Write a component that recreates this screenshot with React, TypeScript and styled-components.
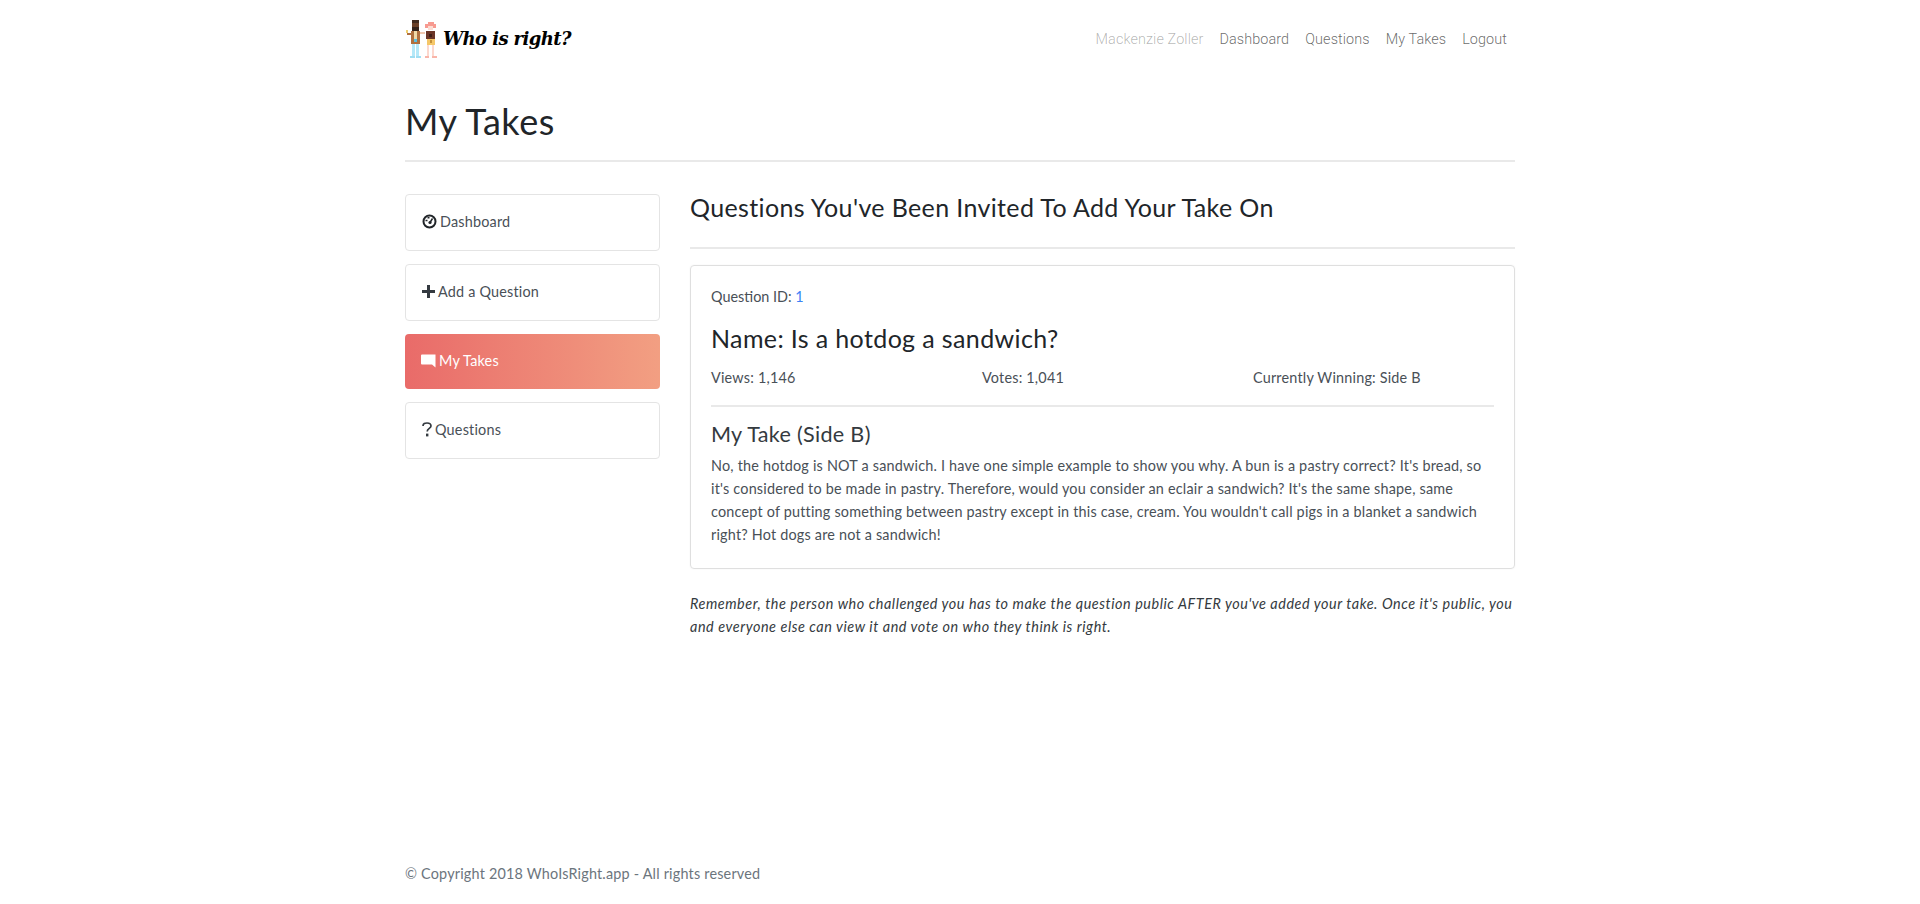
import { ReactNode } from 'react';
import styled, { createGlobalStyle } from 'styled-components';

const GlobalStyle = createGlobalStyle`
  html, body {
    margin: 0;
    padding: 0;
    background: #fff;
  }
  body {
    font-family: Lato, "Open Sans", "Liberation Sans", sans-serif;
    font-size: 14.4px;
    letter-spacing: 0.2px;
    line-height: 23.04px;
    color: #212529;
  }
  * {
    box-sizing: border-box;
  }
`;

const Page = styled.div`
  position: relative;
  width: 1110px;
  min-height: 904px;
  margin: 0 auto;
  display: flex;
  flex-direction: column;
`;

const Header = styled.header`
  display: flex;
  align-items: center;
  justify-content: space-between;
  height: 78px;
`;

const Logo = styled.a`
  display: flex;
  align-items: center;
  gap: 6px;
`;

const LogoText = styled.span`
  font-family: "DejaVu Serif", serif;
  font-style: italic;
  font-weight: 700;
  font-size: 18px;
  letter-spacing: -0.6px;
  color: #000;
  white-space: nowrap;
`;

const Nav = styled.nav`
  display: flex;
  gap: 16px;
  padding: 1px 8px 0 0;
  font-family: Roboto, sans-serif;
  font-weight: 300;
  font-size: 14.4px;
  letter-spacing: 0.1px;
`;

const NavItem = styled.a<{ $muted?: boolean }>`
  color: ${(props) => (props.$muted ? 'rgba(0, 0, 0, 0.3)' : 'rgba(0, 0, 0, 0.6)')};
`;

const PageTitle = styled.h1`
  margin: 0;
  padding: 22px 0 0;
  height: 84px;
  font-size: 36px;
  font-weight: 400;
  line-height: 1.2;
  letter-spacing: 0.5px;
  border-bottom: 2px solid #e9e9e9;
`;

const Columns = styled.div`
  display: grid;
  grid-template-columns: 255px 825px;
  column-gap: 30px;
  margin-top: 32px;
`;

const Sidebar = styled.aside`
  display: flex;
  flex-direction: column;
  gap: 13px;
`;

const SideLink = styled.a<{ $active?: boolean }>`
  display: flex;
  align-items: center;
  gap: 3px;
  height: ${(props) => (props.$active ? '55px' : '57px')};
  padding: 0 16px 2px;
  border-radius: 4px;
  border: ${(props) => (props.$active ? 'none' : '1px solid #e4e4e4')};
  background: ${(props) =>
    props.$active ? 'linear-gradient(90deg, #e96b69 0%, #f29f82 100%)' : '#fff'};
  color: ${(props) => (props.$active ? '#fff' : '#495057')};
`;

const Main = styled.main`
  min-width: 0;
`;

const SectionTitle = styled.h2`
  margin: 0;
  height: 55px;
  font-size: 25px;
  font-weight: 400;
  line-height: 27px;
  letter-spacing: 0.37px;
  border-bottom: 2px solid #e9e9e9;
`;

const Card = styled.section`
  margin-top: 16px;
  height: 304px;
  padding: 20px;
  border: 1px solid #dfdfdf;
  border-radius: 4px;
  box-shadow: 0 0 2px rgba(0, 0, 0, 0.05);
`;

const QuestionId = styled.div`
  color: #495057;
  line-height: 22px;
  letter-spacing: 0;
`;

const IdLink = styled.a`
  color: #3b82f6;
`;

const QuestionName = styled.h3`
  margin: 15px 0 0;
  font-size: 25px;
  font-weight: 400;
  line-height: 30px;
  letter-spacing: 0.37px;
`;

const Stats = styled.div`
  display: grid;
  grid-template-columns: 271px 271px 1fr;
  margin-top: 14px;
  padding-bottom: 16px;
  border-bottom: 2px solid #e9e9e9;
  color: #495057;
  line-height: 22px;
`;

const TakeTitle = styled.h4`
  margin: 13px 0 0;
  font-size: 21.6px;
  font-weight: 400;
  line-height: 28px;
  letter-spacing: 0.3px;
  color: #343a40;
`;

const TakeBody = styled.p`
  margin: 6px 0 0;
  color: #495057;
`;

const Reminder = styled.p`
  margin: 23px 0 0;
  font-style: italic;
  letter-spacing: 0.55px;
  color: #343a40;
`;

const Footer = styled.footer`
  position: absolute;
  left: 0;
  top: 863px;
  color: #6c757d;
  line-height: 22px;
`;

const Px = ({ x, y, w, h, c }: { x: number; y: number; w: number; h: number; c: string }) => (
  <rect x={x} y={y} width={w} height={h} fill={c} />
);

const LogoPeople = () => (
  <svg width="32" height="38" viewBox="0 0 32 38">
    {/* man */}
    <Px x={7} y={0} w={7} h={3} c="#3f2a1e" />
    <Px x={7} y={3} w={7} h={5} c="#6a4028" />
    <Px x={7} y={7} w={7} h={4} c="#33221a" />
    <Px x={6} y={11} w={9} h={13} c="#b0703f" />
    <Px x={9} y={11} w={3} h={8} c="#f0d9a8" />
    <Px x={9} y={19} w={3} h={3} c="#5bbfe0" />
    <Px x={2} y={13} w={4} h={2} c="#b0703f" />
    <Px x={1} y={10} w={2} h={3} c="#f0d070" />
    <Px x={15} y={12} w={5} h={2} c="#f0c8b0" />
    <Px x={7} y={24} w={3} h={12} c="#b5e8f8" />
    <Px x={11} y={24} w={3} h={12} c="#b5e8f8" />
    <Px x={5} y={36} w={5} h={2} c="#a0def2" />
    <Px x={11} y={36} w={5} h={2} c="#a0def2" />
    {/* woman */}
    <Px x={23} y={2} w={6} h={2} c="#f79a90" />
    <Px x={20} y={4} w={11} h={4} c="#f79a90" />
    <Px x={23} y={6} w={5} h={4} c="#fcdcd2" />
    <Px x={21} y={11} w={9} h={8} c="#6b3527" />
    <Px x={24} y={14} w={3} h={3} c="#3f2018" />
    <Px x={22} y={19} w={8} h={6} c="#f5c768" />
    <Px x={25} y={20} w={2} h={3} c="#c4913a" />
    <Px x={22} y={25} w={2} h={11} c="#fcd8ce" />
    <Px x={27} y={25} w={2} h={11} c="#fcd8ce" />
    <Px x={20} y={36} w={4} h={2} c="#f9b5a9" />
    <Px x={27} y={36} w={5} h={2} c="#f9b5a9" />
  </svg>
);

const DashboardIcon = () => (
  <svg width="15" height="15" viewBox="0 0 15 15">
    <circle cx="7.5" cy="7.5" r="6" fill="none" stroke="#212529" strokeWidth="2" />
    <circle cx="8" cy="8.5" r="1.6" fill="#212529" />
    <path d="M8 8.5 L10.5 4.5" stroke="#212529" strokeWidth="1.5" />
    <path d="M3.5 6.5 h2 M5.5 3.8 h2" stroke="#212529" strokeWidth="1.4" />
  </svg>
);

const PlusIcon = () => (
  <svg width="13" height="13" viewBox="0 0 13 13">
    <path d="M5 0h3v5h5v3H8v5H5V8H0V5h5z" fill="#343a40" />
  </svg>
);

const CommentIcon = () => (
  <svg width="15" height="14" viewBox="0 0 15 14">
    <path d="M1 0.5h13.5v13l-3.5-3H1a1 1 0 0 1-1-1v-8a1 1 0 0 1 1-1z" fill="#fff" />
  </svg>
);

const QuestionIcon = () => (
  <svg width="10" height="15" viewBox="0 0 10 15">
    <path
      d="M1 4 C1 1.5 3 1 5 1 C7.4 1 9 2.2 9 4 C9 6.5 5.2 6.3 5.2 9.5"
      fill="none"
      stroke="#343a40"
      strokeWidth="1.7"
    />
    <rect x="4" y="11.6" width="2.4" height="2.8" fill="#343a40" />
  </svg>
);

const sideLinks: { label: string; icon: ReactNode; active?: boolean }[] = [
  { label: 'Dashboard', icon: <DashboardIcon /> },
  { label: 'Add a Question', icon: <PlusIcon /> },
  { label: 'My Takes', icon: <CommentIcon />, active: true },
  { label: 'Questions', icon: <QuestionIcon /> },
];

const App = () => {
  return (
    <>
      <GlobalStyle />
      <Page>
        <Header>
          <Logo>
            <LogoPeople />
            <LogoText>Who is right?</LogoText>
          </Logo>
          <Nav>
            <NavItem $muted>Mackenzie Zoller</NavItem>
            <NavItem>Dashboard</NavItem>
            <NavItem>Questions</NavItem>
            <NavItem>My Takes</NavItem>
            <NavItem>Logout</NavItem>
          </Nav>
        </Header>
        <PageTitle>My Takes</PageTitle>
        <Columns>
          <Sidebar>
            {sideLinks.map((link) => (
              <SideLink key={link.label} $active={link.active}>
                {link.icon}
                <span>{link.label}</span>
              </SideLink>
            ))}
          </Sidebar>
          <Main>
            <SectionTitle>Questions You've Been Invited To Add Your Take On</SectionTitle>
            <Card>
              <QuestionId>
                Question ID: <IdLink>1</IdLink>
              </QuestionId>
              <QuestionName>Name: Is a hotdog a sandwich?</QuestionName>
              <Stats>
                <span>Views: 1,146</span>
                <span>Votes: 1,041</span>
                <span>Currently Winning: Side B</span>
              </Stats>
              <TakeTitle>My Take (Side B)</TakeTitle>
              <TakeBody>
                No, the hotdog is NOT a sandwich. I have one simple example to show you why. A bun is a
                pastry correct? It's bread, so it's considered to be made in pastry. Therefore, would you
                consider an eclair a sandwich? It's the same shape, same concept of putting something
                between pastry except in this case, cream. You wouldn't call pigs in a blanket a sandwich
                right? Hot dogs are not a sandwich!
              </TakeBody>
            </Card>
            <Reminder>
              Remember, the person who challenged you has to make the question public AFTER you've added
              your take. Once it's public, you and everyone else can view it and vote on who they think is
              right.
            </Reminder>
          </Main>
        </Columns>
        <Footer>© Copyright 2018 WhoIsRight.app - All rights reserved</Footer>
      </Page>
    </>
  );
};

export default App;
